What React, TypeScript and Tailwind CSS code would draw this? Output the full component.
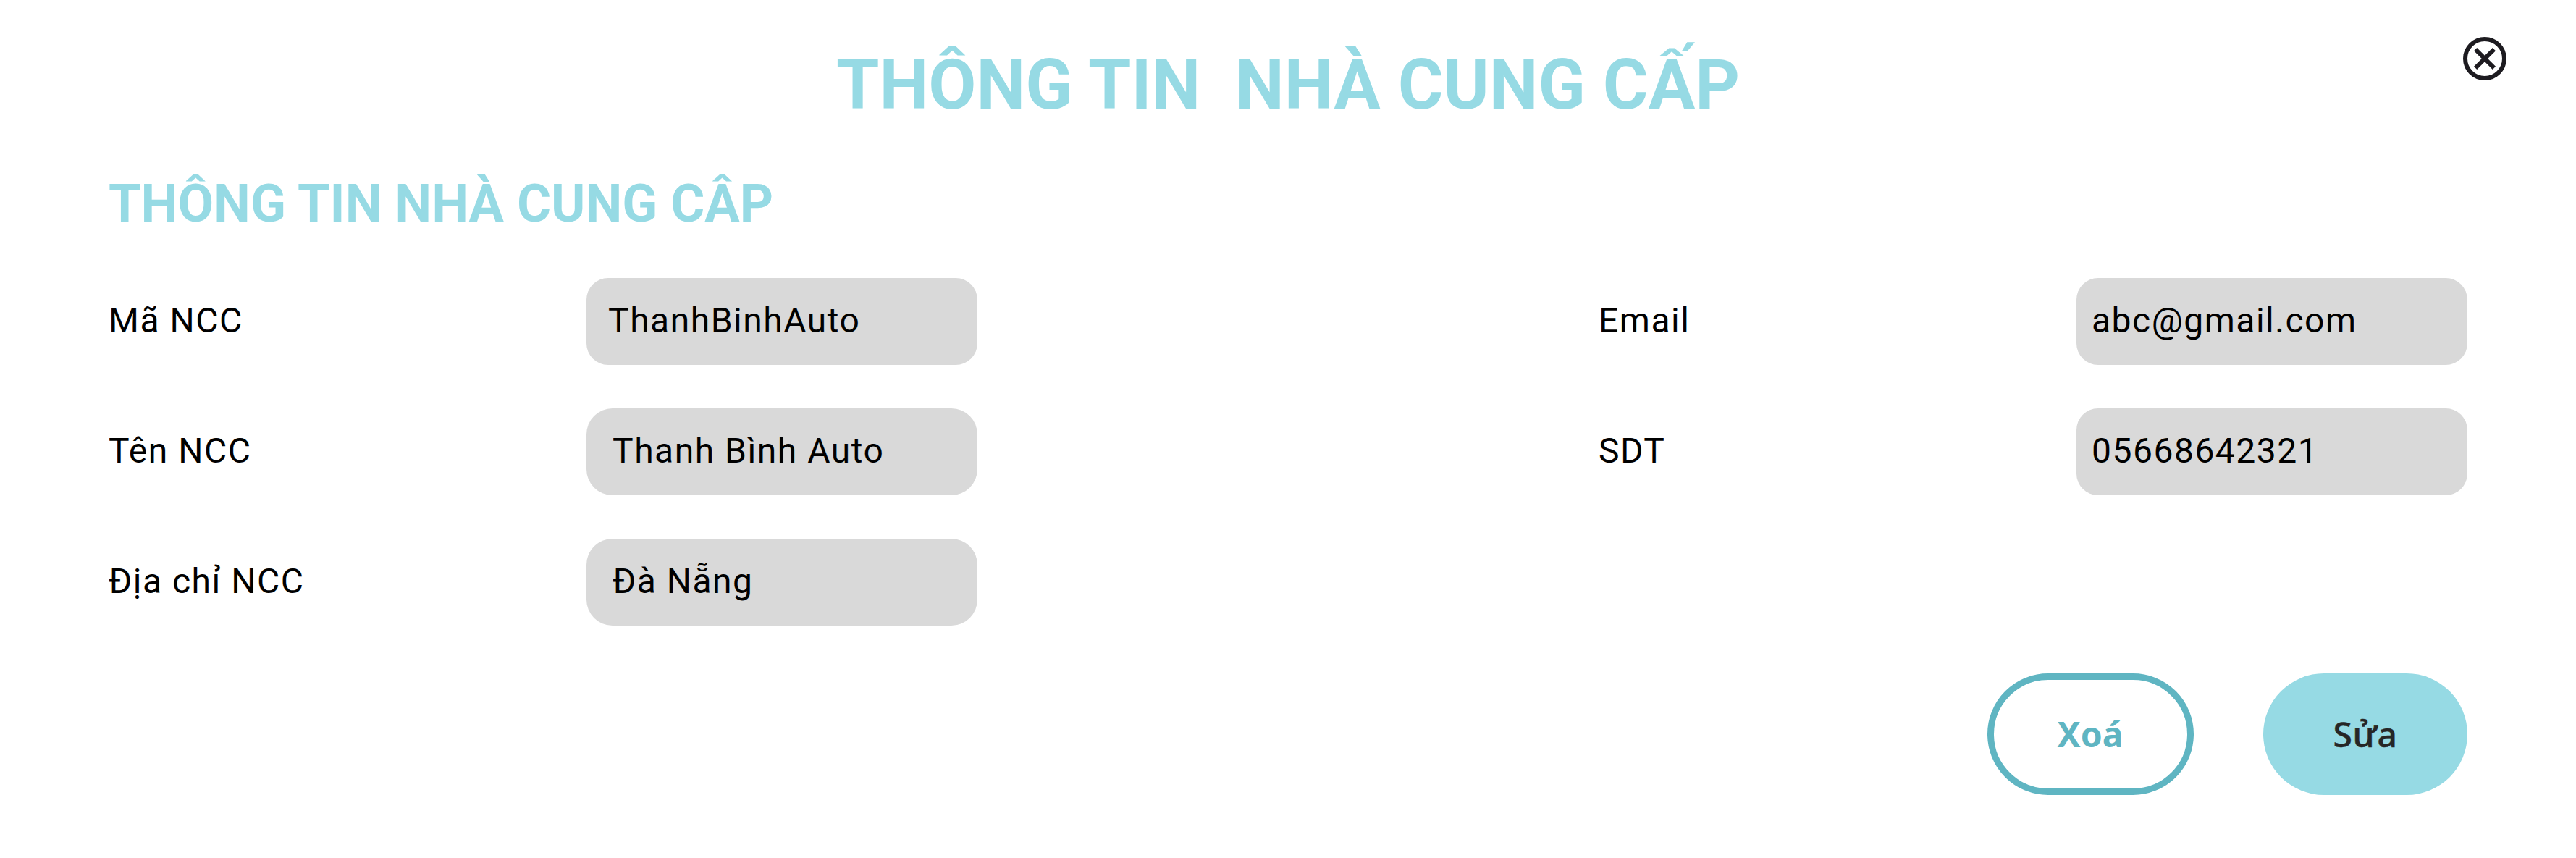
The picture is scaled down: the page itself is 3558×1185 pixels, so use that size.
type FieldProps = { label: string; value: string; box: string };

function Field({ label, value, box }: FieldProps) {
  return (
    <div className="flex h-[120px] text-5xl leading-[57px] tracking-[1.5px] text-black">
      <label className="flex w-[660px] items-center pb-[3px]">{label}</label>
      <div className={`flex w-[540px] items-center bg-[#d9d9d9] pb-[3px] ${box}`}>{value}</div>
    </div>
  );
}

export default function App() {
  return (
    <main className="relative h-[1185px] w-[3558px] overflow-hidden bg-white px-[150px] font-[Roboto,sans-serif]">
      <button className="absolute top-[51px] right-24 size-[60px]" aria-label="Close">
        <svg viewBox="2 2 20 20" className="size-full" fill="#1d1b20">
          <path d="m8.4 17 3.6-3.6 3.6 3.6 1.4-1.4-3.6-3.6L17 8.4 15.6 7 12 10.6 8.4 7 7 8.4l3.6 3.6L7 15.6z" />
          <circle cx="12" cy="12" r="9" fill="none" stroke="#1d1b20" strokeWidth="2" />
        </svg>
      </button>
      <h1 className="pt-[61px] text-center text-8xl leading-[112px] font-bold whitespace-pre text-[#96dae4]">{"THÔNG TIN  NHÀ CUNG CẤP"}</h1>
      <h2 className="mt-[66px] text-7xl leading-[85px] font-bold text-[#96dae4]">THÔNG TIN NHÀ CUNG CÂP</h2>
      <section className="mt-[60px] flex justify-between">
        <div className="flex flex-col gap-[60px]">
          <Field label="Mã NCC" value="ThanhBinhAuto" box="rounded-[30px] pl-[30px]" />
          <Field label="Tên NCC" value="Thanh Bình Auto" box="rounded-[36px] pl-[36px]" />
          <Field label="Địa chỉ NCC" value="Đà Nẵng" box="rounded-[36px] pl-[36px]" />
        </div>
        <div className="flex flex-col gap-[60px]">
          <Field label="Email" value="abc@gmail.com" box="rounded-[30px] pl-[21px]" />
          <Field label="SDT" value="05668642321" box="rounded-[30px] pl-[21px]" />
        </div>
      </section>
      <footer className="mt-[66px] flex justify-end gap-24 font-['Noto_Sans',sans-serif]">
        <button className="h-[168px] w-[285px] rounded-full border-[9px] border-[#5fb5c2] pr-[1px] text-5xl font-bold text-[#5fb5c2]">Xoá</button>
        <button className="h-[168px] w-[282px] rounded-full bg-[#96dae4] text-5xl font-medium tracking-[0.5px] text-[#262626] [-webkit-text-stroke:0.5px_#262626]">Sửa</button>
      </footer>
    </main>
  );
}
